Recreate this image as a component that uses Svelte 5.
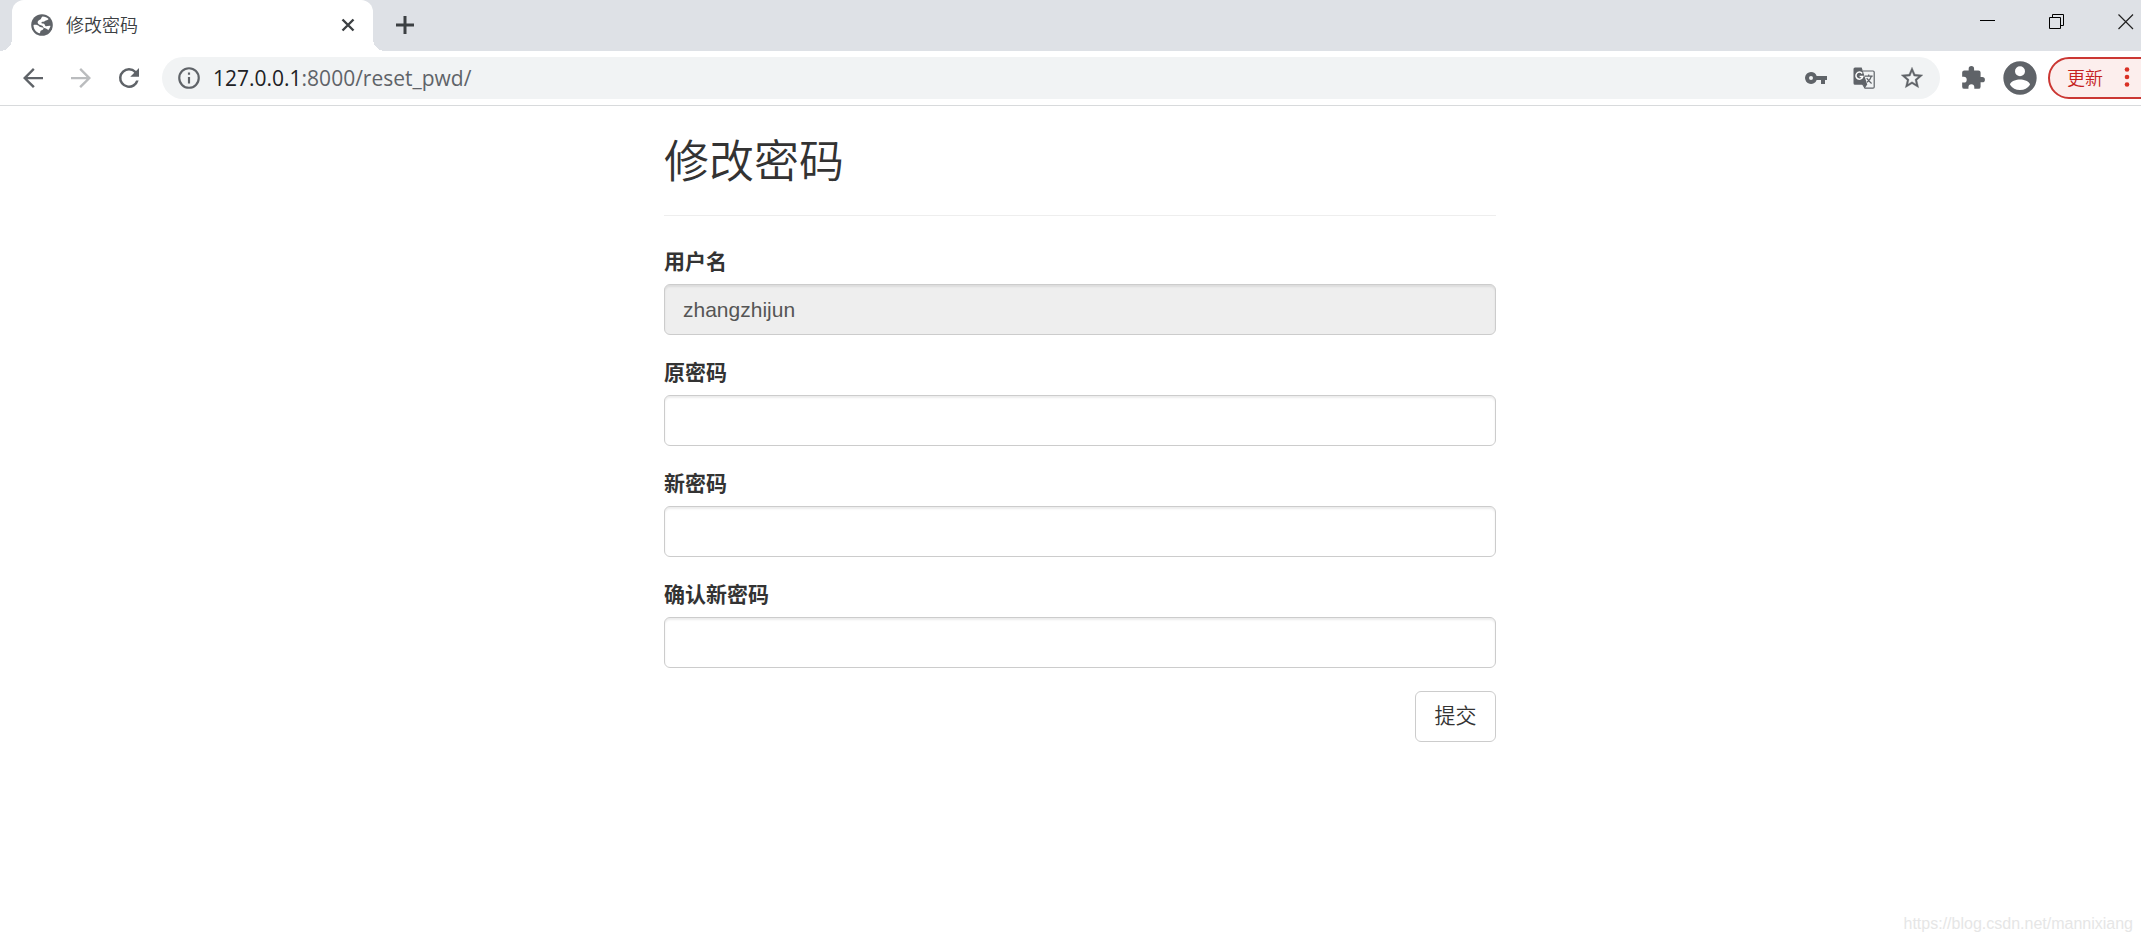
<script>
  const fields = [
    { id: 'username', label: '用户名', type: 'text', value: 'zhangzhijun', disabled: true },
    { id: 'old_pwd', label: '原密码', type: 'password', value: '', disabled: false },
    { id: 'new_pwd', label: '新密码', type: 'password', value: '', disabled: false },
    { id: 're_new_pwd', label: '确认新密码', type: 'password', value: '', disabled: false }
  ];
</script>

<div class="window">
  <header>
    <div class="tabstrip">
      <div class="tab">
        <svg class="globe" viewBox="0 0 22 22" aria-hidden="true">
          <circle cx="11" cy="11" r="10.8" fill="#5f6368" />
          <path fill="#fff" d="M11.500 2.400C14 2.400 16.200 3.400 17.600 5C16.900 6.700 14.900 5.900 14 7C13.200 8 11.500 7.400 10.600 8.200C10 9 10.800 9.500 12 9.500C13.800 9.500 13.800 11.500 14.600 12.200C15.800 12.500 17.600 11.600 19.500 11.900C19 13.600 18.300 15 17.200 16.200C16.200 14.600 14.600 14.400 13.200 14C11.900 13.600 12.500 12.300 11.200 11.800C9.500 11.200 7.300 10.800 6.700 9C6.200 7.200 8 6.200 9.300 5.500C10.400 4.800 10.200 3.200 11.500 2.400Z" />
          <path fill="#fff" d="M2.500 10.900C5.200 10.600 7.600 11.200 8.300 12.400C9.300 13.600 11.600 12.900 12.500 14.100C12.700 15.700 11.200 16.200 10 16.500C9.200 17.200 9.300 18.300 9 19.300C5.200 18.400 2.500 15 2.500 10.900Z" />
        </svg>
        <span class="title">修改密码</span>
        <button class="icon" aria-label="关闭标签页">
          <svg width="14" height="14" viewBox="0 0 14 14"><path d="M1.500 1.500L12.500 12.500M12.500 1.500L1.500 12.500" stroke="#3c4043" stroke-width="2.400" /></svg>
        </button>
      </div>
      <button class="icon newtab" aria-label="新标签页">
        <svg width="18" height="18" viewBox="0 0 18 18"><path d="M9 0V18M0 9H18" stroke="#3c4043" stroke-width="3" /></svg>
      </button>
      <div class="controls">
        <button class="icon" aria-label="最小化"><svg width="16" height="16" viewBox="0 0 16 16"><path d="M0 6.500H15" stroke="#000" /></svg></button>
        <button class="icon" aria-label="还原"><svg width="16" height="16" viewBox="0 0 16 16"><path d="M.5 3.500H11.500V14.500H.5ZM3.500 3.500V.5H14.500V11.500H11.500" fill="none" stroke="#000" /></svg></button>
        <button class="icon" aria-label="关闭"><svg width="16" height="16" viewBox="0 0 16 16"><path d="M.5 .5L15 15M15 .5L.5 15" stroke="#222" stroke-width="1.200" /></svg></button>
      </div>
    </div>

    <div class="toolbar">
      <nav>
        <button class="icon" aria-label="后退"><svg width="30" height="30" viewBox="0 0 24 24"><path fill="#5f6368" d="M20 11.100H7.600l5.700-5.700L12 4l-8 8 8 8 1.400-1.400-5.800-5.700H20z" /></svg></button>
        <button class="icon" aria-label="前进"><svg width="30" height="30" viewBox="0 0 24 24"><path fill="#babcbe" d="M4 11.100h12.400l-5.700-5.700L12 4l8 8-8 8-1.400-1.400 5.800-5.700H4z" /></svg></button>
        <button class="icon" aria-label="重新加载"><svg width="30" height="30" viewBox="0 0 24 24"><path fill="#5f6368" d="M17.650 6.350A7.960 7.960 0 0 0 12 4a8 8 0 1 0 7.730 10h-2.080A6 6 0 1 1 12 6c1.660 0 3.140.69 4.220 1.780L13 11h7V4z" /></svg></button>
      </nav>

      <div class="omnibox">
        <svg width="26" height="26" viewBox="0 0 24 24" aria-hidden="true"><path fill="#5f6368" d="M11 7h2v2h-2zm0 4h2v6h-2zm1-9a10 10 0 1 0 0 20 10 10 0 0 0 0-20zm0 18a8 8 0 1 1 0-16 8 8 0 0 1 0 16z" /></svg>
        <div class="url"><b>127.0.0.1</b>:8000/reset_pwd/</div>
        <button class="icon" aria-label="密码"><svg width="24" height="24" viewBox="0 0 24 24"><path fill="#5f6368" d="M12.650 10A5.990 5.990 0 0 0 7 6a6 6 0 1 0 5.650 8H17v4h4v-4h2v-4zM7 14a2 2 0 1 1 0-4 2 2 0 0 1 0 4z" /></svg></button>
        <button class="icon" aria-label="翻译">
          <svg width="24" height="24" viewBox="0 0 24 24">
            <path d="M11 5H21Q22.200 5 22.200 6.200V21Q22.200 22.200 21 22.200H13L10.500 18" fill="#f1f3f4" stroke="#5f6368" stroke-width="1.200" />
            <path fill="#5f6368" d="M3 1.500H9.700L15.300 18.800H3Q1.500 18.800 1.500 17.300V3Q1.500 1.500 3 1.500ZM11.500 18.800H15L12.800 22.300Z" />
            <path d="M10.200 7.500A3.500 3.500 0 1 0 10.800 10.500H7.600" fill="none" stroke="#fff" stroke-width="1.500" />
            <path d="M13 10.200H20.700M16.700 8.500V10.200M19.400 10.200Q18.300 13.800 15 16.300M14.700 12.100Q16.500 15 19.600 17.500" fill="none" stroke="#5f6368" stroke-width="1.200" />
          </svg>
        </button>
        <button class="icon" aria-label="添加书签"><svg width="26" height="26" viewBox="0 0 24 24"><path fill="#5f6368" stroke="#5f6368" stroke-width=".3" d="M22 9.240l-7.190-.62L12 2 9.190 8.630 2 9.240l5.460 4.730L5.820 21 12 17.270 18.180 21l-1.630-7.030zM12 15.400l-3.760 2.270 1-4.280-3.320-2.880 4.380-.38L12 6.100l1.710 4.040 4.380.38-3.320 2.880 1 4.280z" /></svg></button>
      </div>

      <button class="icon ext" aria-label="扩展程序"><svg width="26" height="26" viewBox="0 0 24 24"><path fill="#5f6368" d="M20.500 11H19V7a2 2 0 0 0-2-2h-4V3.500a2.500 2.500 0 0 0-5 0V5H4a2 2 0 0 0-2 2v3.800h1.500a2.700 2.700 0 0 1 0 5.400H2V20a2 2 0 0 0 2 2h3.800v-1.500a2.700 2.700 0 0 1 5.400 0V22H17a2 2 0 0 0 2-2v-4h1.500a2.500 2.500 0 0 0 0-5z" /></svg></button>
      <button class="icon" aria-label="用户"><svg width="40" height="40" viewBox="0 0 24 24"><path fill="#5f6368" d="M12 2a10 10 0 1 0 0 20 10 10 0 0 0 0-20zm0 3a3 3 0 1 1 0 6 3 3 0 0 1 0-6zm0 14.200a7.200 7.200 0 0 1-6-3.220c.03-1.990 4-3.080 6-3.080s5.970 1.090 6 3.080a7.200 7.200 0 0 1-6 3.220z" /></svg></button>
      <button class="update">更新
        <svg width="6" height="22" viewBox="0 0 6 22" aria-hidden="true"><g fill="#d93025"><circle cx="3" cy="3.500" r="2.300" /><circle cx="3" cy="11" r="2.300" /><circle cx="3" cy="18.500" r="2.300" /></g></svg>
      </button>
    </div>
  </header>

  <main>
    <form onsubmit={(e) => e.preventDefault()}>
      <h1>修改密码</h1>
      {#each fields as f}
        <div class="group">
          <label for={f.id}>{f.label}</label>
          <input id={f.id} type={f.type} value={f.value} disabled={f.disabled} />
        </div>
      {/each}
      <button class="submit" type="submit">提交</button>
    </form>
  </main>

  <footer>https://blog.csdn.net/mannixiang</footer>
</div>

<style>
  :global(body) {
    margin: 0;
    background: #fff;
  }

  .window {
    display: flex;
    flex-direction: column;
    min-height: 100vh;
    overflow: hidden;
    color: #333;
    font-family: "Liberation Sans", "Noto Sans CJK SC", sans-serif;
  }

  .window * {
    box-sizing: border-box;
  }

  .icon {
    display: flex;
    align-items: center;
    justify-content: center;
    flex: none;
    padding: 0;
    border: 0;
    background: none;
  }

  svg {
    display: block;
    flex: none;
  }

  /* tab strip */
  .tabstrip {
    display: flex;
    height: 51px;
    padding-left: 12px;
    background: #dee1e6;
  }

  .tab {
    position: relative;
    display: flex;
    align-items: center;
    width: 361px;
    padding: 0 18px 1px 19px;
    border-radius: 12px 12px 0 0;
    background: #fff;
  }

  .tab::before,
  .tab::after {
    content: "";
    position: absolute;
    bottom: 0;
    width: 12px;
    height: 12px;
  }

  .tab::before {
    right: 100%;
    background: radial-gradient(circle at 0 0, transparent 12px, #fff 12px);
  }

  .tab::after {
    left: 100%;
    background: radial-gradient(circle at 100% 0, transparent 12px, #fff 12px);
  }

  .globe {
    width: 22px;
    height: 22px;
  }

  .title {
    flex: 1;
    padding: 2px 0 0 13px;
    color: #3c4043;
    font-size: 18px;
    font-weight: 350;
    line-height: 24px;
  }

  .newtab {
    margin-left: 23px;
    padding-bottom: 1px;
  }

  .controls {
    display: flex;
    align-items: flex-start;
    gap: 53px;
    margin-left: auto;
    padding: 14px 7px 0 0;
  }

  /* toolbar */
  .toolbar {
    display: flex;
    align-items: center;
    height: 55px;
    padding: 0 0 1px 18px;
    border-bottom: 1px solid #d8dadc;
  }

  nav {
    display: flex;
    gap: 18px;
    margin-right: 18px;
  }

  .omnibox {
    display: flex;
    flex: 1;
    align-items: center;
    min-width: 0;
    height: 42px;
    padding: 0 15px 0 14px;
    border-radius: 21px;
    background: #f1f3f4;
  }

  .omnibox .icon {
    width: 26px;
    margin-left: 22px;
  }

  .url {
    flex: 1;
    padding-left: 11px;
    color: #5f6368;
    font-family: "Open Sans", "Noto Sans", sans-serif;
    font-size: 21px;
    line-height: 30px;
  }

  .url b {
    color: #202124;
    font-weight: 400;
  }

  .ext {
    margin: 0 14px 0 20px;
  }

  .update {
    display: flex;
    flex: none;
    align-items: center;
    gap: 21px;
    height: 42px;
    margin: 0 -20px 0 8px;
    padding: 0 29px 1px 17px;
    border: 2px solid #cb3733;
    border-radius: 21px;
    background: #fceeed;
    color: #c5221f;
    font-family: "Noto Sans CJK SC", sans-serif;
    font-size: 18px;
    font-weight: 350;
    line-height: 24px;
  }

  /* page */
  main {
    display: flex;
    justify-content: center;
    padding-left: 19px;
  }

  form {
    display: flex;
    flex: 0 1 832px;
    flex-direction: column;
  }

  h1 {
    margin: 32px 0 31px;
    padding-bottom: 27px;
    border-bottom: 1px solid #eee;
    font-size: 45px;
    font-weight: 350;
    line-height: 50px;
  }

  .group {
    display: flex;
    flex-direction: column;
    gap: 7px;
    margin-bottom: 23px;
  }

  label {
    font-size: 21px;
    font-weight: 700;
    line-height: 30px;
  }

  input {
    width: 100%;
    height: 51px;
    padding: 0 18px;
    border: 1px solid #ccc;
    border-radius: 6px;
    background: #fff;
    box-shadow: inset 0 2px 2px rgba(0, 0, 0, 0.075);
    color: #555;
    font-family: inherit;
    font-size: 21px;
  }

  input:disabled {
    background: #eee;
  }

  .submit {
    align-self: flex-end;
    min-width: 81px;
    height: 51px;
    padding: 0 18px 5px;
    border: 1px solid #ccc;
    border-radius: 6px;
    background: #fff;
    color: #333;
    font-family: inherit;
    font-size: 21px;
    font-weight: 350;
  }

  footer {
    margin-top: auto;
    padding: 0 8px 8px 0;
    color: #e6e6e6;
    font-size: 16px;
    line-height: 20px;
    text-align: right;
  }
</style>
